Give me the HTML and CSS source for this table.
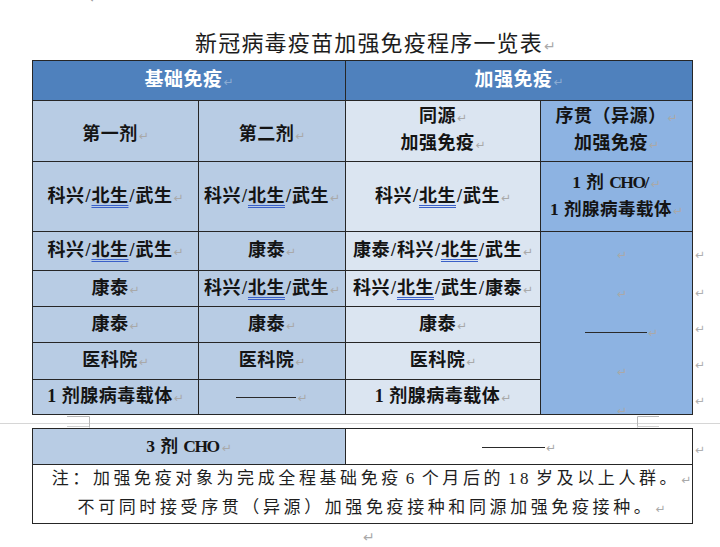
FILE: index.html
```html
<!DOCTYPE html>
<html lang="zh-CN">
<head>
<meta charset="utf-8">
<title>新冠病毒疫苗加强免疫程序一览表</title>
<link rel="stylesheet" href="styles.css">
</head>
<body>
<div class="page">
  <div class="topmark"><span class="pm">↵</span></div>
  <h1 class="title">新冠病毒疫苗加强免疫程序一览表<span class="pm">↵</span></h1>

  <table class="grid main">
    <colgroup><col class="c1"><col class="c2"><col class="c3"><col class="c4"><col class="cx"></colgroup>
    <tr class="r1">
      <td colspan="2" class="cell hd">基础免疫<span class="pm pm-w">↵</span></td>
      <td colspan="2" class="cell hd">加强免疫<span class="pm pm-w">↵</span></td>
      <td class="out"></td>
    </tr>
    <tr class="r2">
      <td class="cell b1 pt">第一剂<span class="pm">↵</span></td>
      <td class="cell b1 pt">第二剂<span class="pm">↵</span></td>
      <td class="cell b3 two">同源<span class="pm">↵</span><br>加强免疫<span class="pm">↵</span></td>
      <td class="cell b4 two">序贯（异源）<span class="pm">↵</span><br>加强免疫<span class="pm">↵</span></td>
      <td class="out"></td>
    </tr>
    <tr class="r3">
      <td class="cell b1">科兴<span class="sl">/</span><span class="ul">北生</span><span class="sl">/</span>武生<span class="pm">↵</span></td>
      <td class="cell b1">科兴<span class="sl">/</span><span class="ul">北生</span><span class="sl">/</span>武生<span class="pm">↵</span></td>
      <td class="cell b3">科兴<span class="sl">/</span><span class="ul">北生</span><span class="sl">/</span>武生<span class="pm">↵</span></td>
      <td class="cell b4 two sm"><span class="lat">1</span> 剂 <span class="lat cho">CHO/</span><span class="pm">↵</span><br><span class="lat">1</span> 剂腺病毒载体<span class="pm">↵</span></td>
      <td class="out"></td>
    </tr>
    <tr class="r4">
      <td class="cell b1">科兴<span class="sl">/</span><span class="ul">北生</span><span class="sl">/</span>武生<span class="pm">↵</span></td>
      <td class="cell b1">康泰<span class="pm">↵</span></td>
      <td class="cell b3">康泰<span class="sl">/</span>科兴<span class="sl">/</span><span class="ul">北生</span><span class="sl">/</span>武生<span class="pm">↵</span></td>
      <td rowspan="5" class="cell b4 merged">
        <div class="stack">
          <span class="ln"><span class="pm">↵</span></span>
          <span class="ln"><span class="pm">↵</span></span>
          <span class="ln"><span class="dash w62"></span><span class="pm">↵</span></span>
          <span class="ln"><span class="pm">↵</span></span>
          <span class="ln"><span class="pm">↵</span></span>
        </div>
      </td>
      <td class="out"><span class="pm">↵</span></td>
    </tr>
    <tr class="r5">
      <td class="cell b1">康泰<span class="pm">↵</span></td>
      <td class="cell b1">科兴<span class="sl">/</span><span class="ul">北生</span><span class="sl">/</span>武生<span class="pm">↵</span></td>
      <td class="cell b3">科兴<span class="sl">/</span><span class="ul">北生</span><span class="sl">/</span>武生<span class="sl">/</span>康泰<span class="pm">↵</span></td>
      <td class="out"><span class="pm">↵</span></td>
    </tr>
    <tr class="r6">
      <td class="cell b1">康泰<span class="pm">↵</span></td>
      <td class="cell b1">康泰<span class="pm">↵</span></td>
      <td class="cell b3">康泰<span class="pm">↵</span></td>
      <td class="out"><span class="pm">↵</span></td>
    </tr>
    <tr class="r7">
      <td class="cell b1">医科院<span class="pm">↵</span></td>
      <td class="cell b1">医科院<span class="pm">↵</span></td>
      <td class="cell b3">医科院<span class="pm">↵</span></td>
      <td class="out"><span class="pm">↵</span></td>
    </tr>
    <tr class="r8">
      <td class="cell b1"><span class="lat">1</span> 剂腺病毒载体<span class="pm">↵</span></td>
      <td class="cell b1"><span class="dash w60"></span><span class="pm">↵</span></td>
      <td class="cell b3"><span class="lat">1</span> 剂腺病毒载体<span class="pm">↵</span></td>
      <td class="out"><span class="pm">↵</span></td>
    </tr>
  </table>

  <svg class="strip" width="720" height="13" viewBox="0 0 720 13" aria-hidden="true">
    <line x1="0" y1="8.5" x2="720" y2="8.5" stroke="#d6d6d6" stroke-width="1"/>
    <path d="M67 1.5H89.5V12.5" fill="none" stroke="#b8b8b8" stroke-width="1"/>
    <path d="M67 11.5H89" fill="none" stroke="#d0d0d0" stroke-width="1"/>
    <path d="M659 1.5H637.5V12.5" fill="none" stroke="#b8b8b8" stroke-width="1"/>
    <path d="M637 11.5H659" fill="none" stroke="#d0d0d0" stroke-width="1"/>
  </svg>

  <table class="grid second">
    <colgroup><col class="d1"><col class="d2"><col class="cx"></colgroup>
    <tr class="s1">
      <td class="cell b1 sm"><span class="lat">3</span> 剂 <span class="lat cho">CHO</span><span class="pm">↵</span></td>
      <td class="cell white"><span class="dash w63"></span><span class="pm">↵</span></td>
      <td class="out out2"><span class="pm">↵</span></td>
    </tr>
    <tr class="s2">
      <td colspan="2" class="cell white note">注：加强免疫对象为完成全程基础免疫 6 个月后的 18 岁及以上人群。<span class="pm">↵</span><br>不可同时接受序贯（异源）加强免疫接种和同源加强免疫接种。<span class="pm">↵</span></td>
      <td class="out"></td>
    </tr>
  </table>

  <div class="endmark"><span class="pm">↵</span></div>
</div>
</body>
</html>
```

FILE: styles.css
```css
* { box-sizing: border-box; }

html, body {
  margin: 0;
  padding: 0;
  background: #ffffff;
}

body {
  width: 720px;
  height: 547px;
  overflow: hidden;
  font-family: "Liberation Serif", "Noto Sans CJK SC", serif;
  color: #141414;
}

.page {
  width: 720px;
}

/* Word paragraph marks */
.pm {
  font-family: "DejaVu Sans", sans-serif;
  font-weight: 400;
  font-size: 12px;
  color: #a9a9a9;
  letter-spacing: 0;
  word-spacing: 0;
  margin-left: 1px;
}

.pm-w {
  color: rgba(255, 255, 255, 0.35);
}

.topmark {
  height: 6px;
  overflow: hidden;
  padding-left: 88px;
}

.topmark .pm {
  display: block;
  margin-top: -10px;
  font-size: 14px;
  line-height: 16px;
  color: #9a9a9a;
}

.title {
  margin: 21px 0 0 0;
  height: 33px;
  padding-left: 195px;
  white-space: nowrap;
  font-family: "Noto Sans CJK SC", sans-serif;
  font-weight: 400;
  font-size: 22px;
  line-height: 28px;
  letter-spacing: 1.2px;
  color: #1c1c1c;
}

.title .pm {
  font-size: 14px;
}

/* tables */
.grid {
  border-collapse: collapse;
  table-layout: fixed;
  margin-left: 32px;
}

.grid td {
  padding: 0;
  text-align: center;
  vertical-align: middle;
  white-space: nowrap;
}

.main { width: 688px; }
.second { width: 688px; }

.c1 { width: 166px; }
.c2 { width: 147px; }
.c3 { width: 195px; }
.c4 { width: 152px; }
.cx { width: 28px; }
.d1 { width: 313px; }
.d2 { width: 347px; }

.cell {
  border: 1px solid #262626;
  font-family: "Liberation Serif", "Noto Sans CJK SC", serif;
  font-weight: 700;
  font-size: 18px;
  letter-spacing: 0.5px;
  line-height: 24px;
}

.hd {
  background: #4f81bd;
  color: #ffffff;
  font-size: 19px;
}

.b1 { background: #b8cce4; }
.b3 { background: #dbe5f1; }
.b4 { background: #8db3e2; }
.white { background: #ffffff; }

.pt { padding-top: 8px !important; }

.two { line-height: 25px; }
.sm { font-size: 17.5px; }

.sl {
  margin: 0 1px;
  letter-spacing: 0;
}

.lat {
  font-family: "Liberation Serif", serif;
}

.cho {
  letter-spacing: -1.5px;
  margin-right: 2px;
}

.ul {
  text-decoration-line: underline;
  text-decoration-style: double;
  text-decoration-color: #3a60c8;
  text-decoration-thickness: 1px;
  text-underline-offset: 3px;
}

.r1 { height: 40px; }
.r2 { height: 61px; }
.r3 { height: 70px; }
.r4 { height: 39px; }
.r5 { height: 36px; }
.r6 { height: 36px; }
.r7 { height: 37px; }
.r8 { height: 35px; }
.s1 { height: 36px; }
.s2 { height: 55px; }

.out {
  border: none;
  text-align: left !important;
  padding: 6px 0 0 2px !important;
  background: transparent;
}

.out .pm {
  margin-left: 0;
  color: #b0b0b0;
}

.out2 {
  padding-top: 4px !important;
}

/* merged sequential column */
.merged {
  vertical-align: top !important;
}

.stack {
  height: 181px;
  overflow: hidden;
  display: flex;
  flex-direction: column;
  padding-top: 3px;
}

.ln {
  flex: 0 0 39px;
  display: flex;
  align-items: center;
  justify-content: center;
  padding-left: 10px;
}

.dash {
  display: inline-block;
  height: 1px;
  background: #2a2a2a;
  vertical-align: middle;
}

.w60 { width: 60px; }
.w62 { width: 62px; }
.w63 { width: 63px; }

.note {
  font-family: "Liberation Serif", "Noto Sans CJK SC", serif;
  font-weight: 400;
  font-size: 17px;
  letter-spacing: 3.6px;
  word-spacing: -4px;
  line-height: 27px;
  padding-left: 18px !important;
  color: #1e1e1e;
}

.strip {
  display: block;
}

.endmark {
  padding-left: 362px;
  padding-top: 5px;
  line-height: 16px;
}

.endmark .pm {
  font-size: 14px;
}
```
